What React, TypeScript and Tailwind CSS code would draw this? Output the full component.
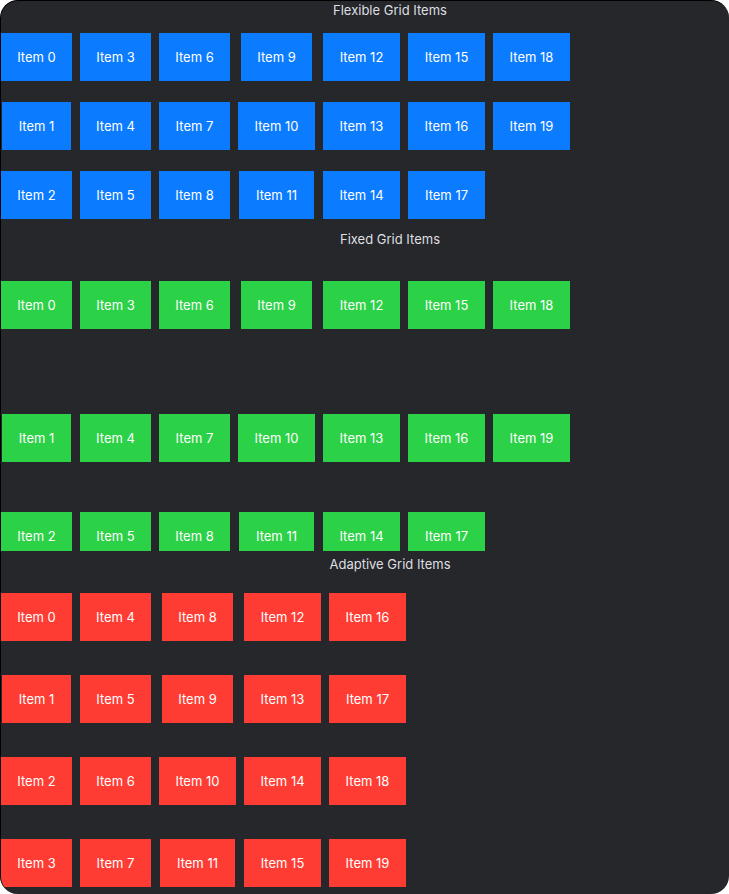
import React from 'react';

// widths of each tile, taken from the reference (text width + ~34px padding)
const tileWidth = (n: number): string => {
  if (n === 1) return 'w-[69px]';
  if (n === 10) return 'w-[77px]';
  if (n === 11) return 'w-[75px]';
  if (n >= 12) return 'w-[77px]';
  return 'w-[71px]';
};

const range = (n: number) => Array.from({ length: n }, (_, i) => i);

const Tile: React.FC<{ n: number; color: string }> = ({ n, color }) => (
  <div
    className={`${tileWidth(n)} h-[48px] ${color} flex items-center justify-center self-center text-[13px] leading-none text-white`}
  >
    Item {n}
  </div>
);

const Title: React.FC<{ text: string; className?: string }> = ({ text, className = '' }) => (
  <div className={`h-[16px] pl-[50px] text-center text-[13px] leading-[16px] text-[#dedfe1] ${className}`}>
    {text}
  </div>
);

const App: React.FC = () => {
  return (
    <div className="min-h-screen bg-white font-['Inter','Liberation_Sans',sans-serif]">
      <div className="w-[729px] h-[894px] rounded-[18px] overflow-hidden bg-[#26272b] border-t border-l border-black flex flex-col">
        {/* Flexible */}
        <Title text="Flexible Grid Items" className="mt-[1px]" />
        <div className="mt-[15px] grid grid-flow-col grid-rows-[48px_48px_48px] auto-cols-max gap-x-2 gap-y-[21px] justify-items-center justify-start">
          {range(20).map((n) => (
            <Tile key={n} n={n} color="bg-[#0b7bff]" />
          ))}
        </div>

        {/* Fixed */}
        <Title text="Fixed Grid Items" className="mt-[12px]" />
        <div className="mt-[8px] h-[296px] overflow-hidden grid grid-flow-col grid-rows-[100px_150px_30px] auto-cols-max gap-x-2 gap-y-2 justify-items-center justify-start">
          {range(20).map((n) => (
            <Tile key={n} n={n} color="bg-[#2bd146]" />
          ))}
        </div>

        {/* Adaptive */}
        <Title text="Adaptive Grid Items" className="mt-[5px]" />
        <div className="mt-[21px] grid grid-flow-col grid-rows-[48px_48px_48px_48px] auto-cols-max gap-x-2 gap-y-[34px] justify-items-center justify-start">
          {range(20).map((n) => (
            <Tile key={n} n={n} color="bg-[#ff3c33]" />
          ))}
        </div>
      </div>
    </div>
  );
};

export default App;
